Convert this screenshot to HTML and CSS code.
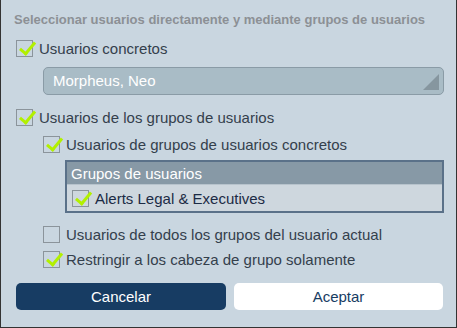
FILE: index.html
```html
<!DOCTYPE html>
<html lang="es">
<head>
  <meta charset="UTF-8">
  <title>Seleccionar usuarios</title>
  <link rel="stylesheet" href="styles.css">
</head>
<body>
  <div class="dialog">
    <div class="title">Seleccionar usuarios directamente y mediante grupos de usuarios</div>

    <label class="opt">
      <span class="box checked"></span>
      Usuarios concretos
    </label>

    <div class="dropdown">
      <span>Morpheus, Neo</span>
      <span class="corner"></span>
    </div>

    <label class="opt">
      <span class="box checked"></span>
      Usuarios de los grupos de usuarios
    </label>

    <div class="sub">
      <label class="opt">
        <span class="box checked"></span>
        Usuarios de grupos de usuarios concretos
      </label>

      <div class="groups">
        <div class="groups-head">Grupos de usuarios</div>
        <label class="groups-row">
          <span class="box checked"></span>
          Alerts Legal &amp; Executives
        </label>
      </div>

      <label class="opt opt-gap">
        <span class="box"></span>
        Usuarios de todos los grupos del usuario actual
      </label>

      <label class="opt opt-last">
        <span class="box checked"></span>
        Restringir a los cabeza de grupo solamente
      </label>
    </div>

    <div class="actions">
      <button class="btn primary">Cancelar</button>
      <button class="btn">Aceptar</button>
    </div>
  </div>
</body>
</html>
```

FILE: styles.css
```css
:root {
  --bg: #c9d6e0;
  --text: #34404c;
  --navy: #173c63;
  --check: #b2f000;
}

* {
  box-sizing: border-box;
}

body {
  margin: 0;
  font-family: 'Liberation Sans', Arial, sans-serif;
}

.dialog {
  width: 457px;
  height: 328px;
  background: var(--bg);
  border: 1px solid #333;
  border-top: none;
  padding: 10px 12px 0 15px;
  display: flex;
  flex-direction: column;
  color: var(--text);
}

.title {
  font-size: 13px;
  font-weight: bold;
  color: #8c9095;
  margin-left: -2px;
  height: 20px;
  line-height: 20px;
}

.opt {
  display: flex;
  align-items: center;
  gap: 6px;
  font-size: 15px;
  height: 26px;
  margin-top: 5px;
}

.box {
  position: relative;
  width: 17px;
  height: 17px;
  border: 1px solid #8b949b;
  flex: none;
}

.box.checked::after {
  content: "";
  position: absolute;
  left: 2px;
  top: 9px;
  width: 13px;
  height: 6px;
  border-left: 3px solid var(--check);
  border-bottom: 3px solid var(--check);
  transform: rotate(-50deg);
  transform-origin: 0 0;
}

.dropdown {
  position: relative;
  margin: 6px 0 4px 27px;
  height: 28px;
  background: #a9bcc6;
  border: 1px solid #8a9ba6;
  border-radius: 5px;
  color: #fff;
  font-size: 15px;
  line-height: 26px;
  padding-left: 9px;
}

.corner {
  position: absolute;
  right: 4px;
  bottom: 4px;
  width: 0;
  height: 0;
  border-left: 16px solid transparent;
  border-bottom: 16px solid #86969f;
}

.sub {
  padding-left: 27px;
  margin-top: 1px;
  display: flex;
  flex-direction: column;
}

.sub .opt {
  margin-top: 0;
}

.groups {
  margin: 3px 0 0 22px;
  border: 2px solid #5a7189;
}

.groups-head {
  background: #8799a6;
  color: #fff;
  font-size: 15px;
  height: 23px;
  line-height: 23px;
  padding-left: 4px;
  border-bottom: 1px solid #b7c3cc;
}

.groups-row {
  display: flex;
  align-items: center;
  gap: 6px;
  background: #ced7de;
  height: 26px;
  padding-left: 5px;
  font-size: 15px;
  color: #1c2b45;
}

.sub .opt-gap {
  margin-top: 8px;
}

.sub .opt-last {
  margin-top: -1px;
}

.actions {
  display: grid;
  grid-template-columns: 210px 209px;
  gap: 8px;
  margin-top: 11px;
}

.btn {
  height: 27px;
  border: none;
  border-radius: 5px;
  font-family: inherit;
  font-size: 15px;
  background: #fff;
  color: var(--navy);
}

.btn.primary {
  background: var(--navy);
  color: #fff;
}
```
